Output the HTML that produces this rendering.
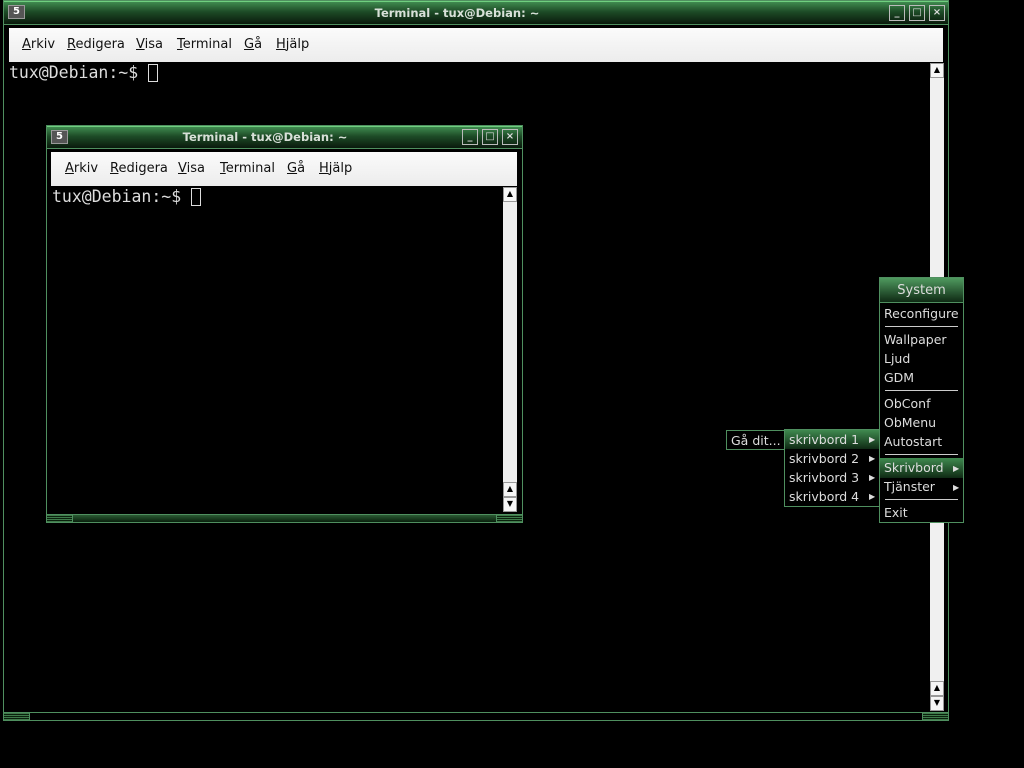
<!DOCTYPE html>
<html><head><meta charset="utf-8"><style>
*{margin:0;padding:0;box-sizing:border-box}
body{width:1024px;height:768px;background:#000;position:relative;overflow:hidden;font-family:"DejaVu Sans","Liberation Sans",sans-serif}
.a{position:absolute}
.win{border:1px solid #4f8f5f;background:#000}
.tb{background:linear-gradient(#3f8a4f,#1d4a26 45%,#0a1a0c);border-bottom:1px solid #4f8f5f;color:#d8e0d8;font-weight:bold;font-size:11.5px;text-align:center}
.ic{background:#555;border:1px solid #999;color:#fff;font-size:10px;font-weight:bold;line-height:11px;text-align:center}
.btn{border:1px solid #bbb;width:16px;height:16px;color:#ddd;font-size:10px;text-align:center;line-height:14px;font-weight:bold}
.mb{background:linear-gradient(#fbfbfb,#ececec);font-size:13px;color:#111}
.mb span{position:absolute;top:9px}
.term{font-family:"DejaVu Sans Mono","Liberation Mono",monospace;color:#ddd;font-size:16.5px}
.cur{display:inline-block;width:10px;height:18px;border:1px solid #ddd;vertical-align:-4px}
.sb{background:#f0f0f0}
.sbb{background:#f6f6f6;border:1px solid #999;font-size:8px;text-align:center;line-height:12px;color:#000}
.hd{border:1px solid #4f8f5f;background:repeating-linear-gradient(#3f7a4a 0 1px,#0a200d 1px 2px)}
.menu{border:1px solid #4f8f5f;background:#000;color:#ddd;font-size:12.5px}
.it{position:absolute;left:4px}
.sep{position:absolute;left:5px;right:5px;height:1px;background:#ccc}
.sel{background:linear-gradient(#3f8a4f,#0f2a14)}
.arr{position:absolute;font-size:8px}
</style></head><body>

<!-- big window -->
<div class="a win" style="left:3px;top:0;width:946px;height:721px"></div>
<div class="a tb" style="left:4px;top:1px;width:944px;height:24px;line-height:22px;border-top:1px solid #6fcf7f"><div class="a" style="left:21px;width:864px;top:0">Terminal - tux@Debian: ~</div></div>
<div class="a ic" style="left:8px;top:5px;width:17px;height:14px">5</div>
<div class="a btn" style="left:889px;top:5px">_</div>
<div class="a btn" style="left:909px;top:5px">□</div>
<div class="a btn" style="left:929px;top:5px">×</div>
<div class="a mb" style="left:9px;top:28px;width:934px;height:34px">
<span style="left:13px"><u>A</u>rkiv</span><span style="left:58px"><u>R</u>edigera</span><span style="left:127px"><u>V</u>isa</span><span style="left:168px"><u>T</u>erminal</span><span style="left:235px"><u>G</u>å</span><span style="left:267px"><u>H</u>jälp</span></div>
<div class="a term" style="left:9px;top:63px">tux@Debian:~$ <span class="cur"></span></div>
<div class="a sb" style="left:930px;top:63px;width:14px;height:648px"></div>
<div class="a sbb" style="left:930px;top:63px;width:14px;height:15px">▲</div>
<div class="a sbb" style="left:930px;top:681px;width:14px;height:15px">▲</div>
<div class="a sbb" style="left:930px;top:696px;width:14px;height:15px">▼</div>
<div class="a" style="left:3px;top:712px;width:946px;height:9px;border:1px solid #4f8f5f"></div>
<div class="a hd" style="left:3px;top:712px;width:27px;height:9px"></div>
<div class="a hd" style="left:922px;top:712px;width:27px;height:9px"></div>

<!-- small window -->
<div class="a win" style="left:46px;top:125px;width:477px;height:398px"></div>
<div class="a tb" style="left:47px;top:126px;width:475px;height:23px;line-height:21px;border-top:1px solid #6fcf7f"><div class="a" style="left:21px;width:394px;top:0">Terminal - tux@Debian: ~</div></div>
<div class="a ic" style="left:51px;top:130px;width:17px;height:14px">5</div>
<div class="a btn" style="left:462px;top:129px">_</div>
<div class="a btn" style="left:482px;top:129px">□</div>
<div class="a btn" style="left:502px;top:129px">×</div>
<div class="a mb" style="left:51px;top:152px;width:466px;height:34px">
<span style="left:14px"><u>A</u>rkiv</span><span style="left:59px"><u>R</u>edigera</span><span style="left:127px"><u>V</u>isa</span><span style="left:169px"><u>T</u>erminal</span><span style="left:236px"><u>G</u>å</span><span style="left:268px"><u>H</u>jälp</span></div>
<div class="a term" style="left:52px;top:187px">tux@Debian:~$ <span class="cur"></span></div>
<div class="a sb" style="left:503px;top:187px;width:14px;height:325px"></div>
<div class="a sbb" style="left:503px;top:187px;width:14px;height:15px">▲</div>
<div class="a sbb" style="left:503px;top:482px;width:14px;height:15px">▲</div>
<div class="a sbb" style="left:503px;top:497px;width:14px;height:15px">▼</div>
<div class="a" style="left:46px;top:514px;width:477px;height:9px;border:1px solid #4f8f5f;background:linear-gradient(#2a5a33,#0a200d)"></div>
<div class="a hd" style="left:46px;top:514px;width:27px;height:9px"></div>
<div class="a hd" style="left:496px;top:514px;width:27px;height:9px"></div>

<!-- menus -->
<div class="a menu" style="left:726px;top:430px;width:60px;height:20px"><div class="it" style="top:2px">Gå dit...</div></div>
<div class="a menu" style="left:784px;top:429px;width:97px;height:78px">
<div class="a sel" style="left:0;top:0;width:95px;height:19px"></div>
<div class="it" style="top:2px">skrivbord 1</div><div class="arr" style="left:84px;top:5px">▶</div>
<div class="it" style="top:21px">skrivbord 2</div><div class="arr" style="left:84px;top:24px">▶</div>
<div class="it" style="top:40px">skrivbord 3</div><div class="arr" style="left:84px;top:43px">▶</div>
<div class="it" style="top:59px">skrivbord 4</div><div class="arr" style="left:84px;top:62px">▶</div>
</div>
<div class="a menu" style="left:879px;top:277px;width:85px;height:246px">
<div class="a" style="left:0;top:0;width:83px;height:25px;background:linear-gradient(#4f9a5f,#0f2a14);border-bottom:1px solid #4f8f5f;text-align:center;line-height:25px;font-size:13px">System</div>
<div class="it" style="top:28px">Reconfigure</div>
<div class="sep" style="top:48px"></div>
<div class="it" style="top:54px">Wallpaper</div>
<div class="it" style="top:73px">Ljud</div>
<div class="it" style="top:92px">GDM</div>
<div class="sep" style="top:112px"></div>
<div class="it" style="top:118px">ObConf</div>
<div class="it" style="top:137px">ObMenu</div>
<div class="it" style="top:156px">Autostart</div>
<div class="sep" style="top:176px"></div>
<div class="a sel" style="left:0;top:180px;width:83px;height:20px"></div>
<div class="it" style="top:182px">Skrivbord</div><div class="arr" style="left:73px;top:186px">▶</div>
<div class="it" style="top:201px">Tjänster</div><div class="arr" style="left:73px;top:205px">▶</div>
<div class="sep" style="top:221px"></div>
<div class="it" style="top:227px">Exit</div>
</div>
</body></html>
